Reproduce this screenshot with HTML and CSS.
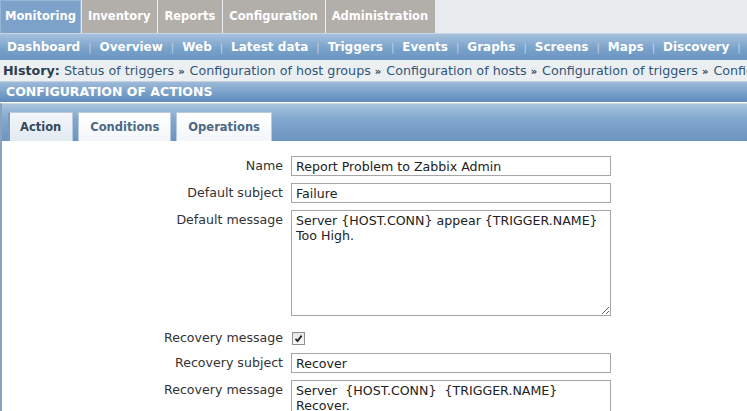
FILE: index.html
```html
<!DOCTYPE html>
<html lang="en">
<head>
    <meta charset="UTF-8">
    <title>Configuration of actions</title>
    <link rel="stylesheet" href="styles.css">
</head>
<body>
    <div class="main-menu">
        <a class="main-tab active" href="#">Monitoring</a>
        <a class="main-tab" href="#">Inventory</a>
        <a class="main-tab" href="#">Reports</a>
        <a class="main-tab" href="#">Configuration</a>
        <a class="main-tab" href="#">Administration</a>
    </div>

    <div class="sub-menu">
        <a href="#">Dashboard</a><span class="sep">|</span>
        <a href="#">Overview</a><span class="sep">|</span>
        <a href="#">Web</a><span class="sep">|</span>
        <a href="#">Latest data</a><span class="sep">|</span>
        <a href="#">Triggers</a><span class="sep">|</span>
        <a href="#">Events</a><span class="sep">|</span>
        <a href="#">Graphs</a><span class="sep">|</span>
        <a href="#">Screens</a><span class="sep">|</span>
        <a href="#">Maps</a><span class="sep">|</span>
        <a href="#">Discovery</a><span class="sep">|</span>
        <a href="#">IT services</a>
    </div>

    <div class="history">
        <b>History:</b>
        <a href="#">Status of triggers</a><span class="raquo">&raquo;</span><a href="#">Configuration of host groups</a><span class="raquo">&raquo;</span><a href="#">Configuration of hosts</a><span class="raquo">&raquo;</span><a href="#">Configuration of triggers</a><span class="raquo">&raquo;</span><a href="#">Configuration of actions</a>
    </div>

    <div class="page-header">CONFIGURATION OF ACTIONS</div>

    <div class="tabs">
        <a class="tab active" href="#">Action</a>
        <a class="tab" href="#">Conditions</a>
        <a class="tab" href="#">Operations</a>
    </div>

    <div class="form-panel">
        <div class="form-grid">
            <label>Name</label>
            <input type="text" value="Report Problem to Zabbix Admin">

            <label>Default subject</label>
            <input type="text" value="Failure">

            <label>Default message</label>
            <textarea>Server {HOST.CONN} appear {TRIGGER.NAME}
Too High.</textarea>

            <label class="check-label">Recovery message</label>
            <div class="check-cell">
                <span class="checkbox">
                    <svg width="9" height="9" viewBox="0 0 9 9"><path d="M1.5 4.8 L3.6 7 L7.6 1.6" fill="none" stroke="#222" stroke-width="1.8"/></svg>
                </span>
            </div>

            <label>Recovery subject</label>
            <input type="text" value="Recover">

            <label>Recovery message</label>
            <textarea>Server  {HOST.CONN}  {TRIGGER.NAME}
Recover.</textarea>
        </div>
    </div>
</body>
</html>
```

FILE: styles.css
```css
body {
    margin: 0;
    font-family: "DejaVu Sans", Verdana, sans-serif;
    font-size: 12px;
    background-color: #ffffff;
    overflow: hidden;
}
a {
    text-decoration: none;
}
.main-menu {
    display: flex;
    height: 33px;
    background: #e9ecef;
}
.main-tab {
    display: flex;
    align-items: center;
    padding: 0 7px 2px 6px;
    margin-right: 1px;
    background: #b2afaa;
    color: #ffffff;
    font-weight: bold;
    font-size: 11.5px;
}
.main-tab.active {
    background: #7da2c9;
    border: 1px solid #97b6d6;
    border-bottom: none;
    padding: 0 4px 2px 4px;
}
.sub-menu {
    display: flex;
    align-items: center;
    height: 27px;
    padding-left: 7px;
    white-space: nowrap;
    overflow: hidden;
    background: linear-gradient(#a6c1dc, #77a0c9 60%, #6b95c2);
    border-top: 1px solid #c9d8e8;
    box-sizing: border-box;
}
.sub-menu a {
    color: #ffffff;
    font-weight: bold;
    font-size: 12px;
}
.sub-menu .sep {
    color: #c3d4e6;
    font-size: 10px;
    margin: 0 8px;
}
.history {
    height: 22px;
    line-height: 22px;
    padding-left: 3px;
    white-space: nowrap;
    overflow: hidden;
    background: #eceff2;
    color: #2b3c4f;
    font-size: 12.7px;
    border-bottom: 1px solid #c5d1dc;
    box-sizing: border-box;
}
.history b {
    color: #2b3c4f;
}
.history a {
    color: #2f5678;
}
.raquo {
    font-weight: bold;
    font-size: 10px;
    color: #2b3c4f;
    margin: 0 5px 0 4px;
}
.page-header {
    height: 20px;
    line-height: 20px;
    padding-left: 6px;
    color: #ffffff;
    font-weight: bold;
    font-size: 12.5px;
    background: linear-gradient(#9dbbd9, #6f98c4 70%, #5f8bbb);
    border-bottom: 1px solid #ffffff;
}
.tabs {
    display: flex;
    align-items: flex-end;
    height: 38px;
    padding-left: 6px;
    background: linear-gradient(#a9c4df, #82a8ce 40%, #6b94c0);
    border-left: 2px solid #8aa3bd;
    border-top: 1px solid #c8d7e6;
    box-sizing: border-box;
}
.tab {
    display: flex;
    align-items: center;
    height: 29px;
    padding: 0 11px;
    margin-right: 5px;
    background: linear-gradient(#ffffff, #f3f6f9);
    border: 1px solid #b8cadc;
    border-bottom: none;
    color: #4c6885;
    font-weight: bold;
    font-size: 11.5px;
    box-sizing: border-box;
}
.tab.active {
    background: linear-gradient(#f3f6fa, #e2eaf2);
    border-left: 2px solid #7e9ab6;
    color: #34495e;
    padding: 0 11px 0 10px;
}
.form-panel {
    border-left: 2px solid #8aa3bd;
    padding-top: 15px;
    height: 300px;
}
.form-grid {
    display: grid;
    grid-template-columns: 281px 320px;
    column-gap: 8px;
    row-gap: 7px;
    align-items: start;
}
.form-grid label {
    text-align: right;
    color: #333333;
    font-size: 12.6px;
    line-height: 20px;
}
.form-grid input[type="text"],
.form-grid textarea {
    margin: 0;
    height: 20px;
    padding: 0 4px;
    border: 1px solid #a6a6a6;
    font-family: "DejaVu Sans", Verdana, sans-serif;
    font-size: 12.6px;
    color: #222222;
    box-sizing: border-box;
}
.form-grid textarea {
    height: 106px;
    padding: 2px 4px;
    line-height: 15px;
    resize: both;
}
.form-grid .check-label {
    margin-top: 7px;
    line-height: 16px;
}
.check-cell {
    margin-top: 7px;
    height: 16px;
    display: flex;
    align-items: center;
    padding-left: 1px;
}
.checkbox {
    display: flex;
    align-items: center;
    justify-content: center;
    width: 11px;
    height: 11px;
    border: 1px solid #8f8f8f;
    background: linear-gradient(#e6e6e6, #fafafa);
}
```
